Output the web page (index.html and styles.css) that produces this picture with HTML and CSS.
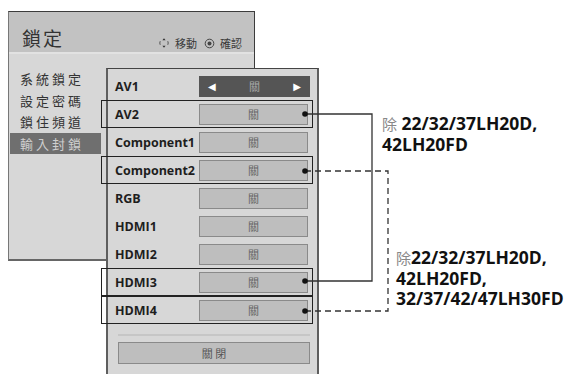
FILE: index.html
```html
<!DOCTYPE html>
<html lang="zh-Hant">

<head>
    <meta charset="utf-8">
    <title>鎖定</title>
    <link rel="stylesheet" href="styles.css">
</head>

<body>
    <div class="stage">
        <!-- main lock menu -->
        <section class="lock-menu">
            <header class="lock-head">
                <h1>鎖定</h1>
                <div class="hints">
                    <span class="hint">
                        <svg width="12" height="12" viewBox="0 0 12 12">
                            <path d="M6 1.2 L7.6 3.2 H4.4 Z M6 10.8 L7.6 8.8 H4.4 Z" fill="#333"/>
                            <path d="M2.2 4.2 A4.3 4.3 0 0 0 2.2 7.8 M9.8 4.2 A4.3 4.3 0 0 1 9.8 7.8" fill="none" stroke="#555" stroke-width="1"/>
                        </svg>
                        移動
                    </span>
                    <span class="hint">
                        <svg width="11" height="11" viewBox="0 0 11 11">
                            <circle cx="5.5" cy="5.5" r="4.3" fill="none" stroke="#444" stroke-width="1"/>
                            <circle cx="5.5" cy="5.5" r="2" fill="#444"/>
                        </svg>
                        確認
                    </span>
                </div>
            </header>
            <ul class="lock-list">
                <li>系統鎖定</li>
                <li>設定密碼</li>
                <li>鎖住頻道</li>
                <li class="active">輸入封鎖</li>
            </ul>
        </section>

        <!-- input block sub menu -->
        <section class="input-panel">
            <div class="row">
                <span class="label">AV1</span>
                <span class="value select"><span class="arr">&#9664;</span>關<span class="arr">&#9654;</span></span>
            </div>
            <div class="row marked">
                <span class="label">AV2</span>
                <span class="value">關</span>
            </div>
            <div class="row">
                <span class="label">Component1</span>
                <span class="value">關</span>
            </div>
            <div class="row marked">
                <span class="label">Component2</span>
                <span class="value">關</span>
            </div>
            <div class="row">
                <span class="label">RGB</span>
                <span class="value">關</span>
            </div>
            <div class="row">
                <span class="label">HDMI1</span>
                <span class="value">關</span>
            </div>
            <div class="row">
                <span class="label">HDMI2</span>
                <span class="value">關</span>
            </div>
            <div class="row marked">
                <span class="label">HDMI3</span>
                <span class="value">關</span>
            </div>
            <div class="row marked">
                <span class="label">HDMI4</span>
                <span class="value">關</span>
            </div>
            <div class="sep"></div>
            <div class="close-btn">關 閉</div>
        </section>

        <!-- leader lines to the notes -->
        <svg class="leaders" width="576" height="374" viewBox="0 0 576 374">
            <path d="M305 114 H372 V281 H305" fill="none" stroke="#333" stroke-width="1.3"/>
            <path d="M305 171 H388 V311 H305" fill="none" stroke="#333" stroke-width="1.3" stroke-dasharray="6 4"/>
            <circle cx="305" cy="114" r="2.8" fill="#111"/>
            <circle cx="305" cy="171" r="2.8" fill="#111"/>
            <circle cx="305" cy="281" r="2.8" fill="#111"/>
            <circle cx="305" cy="311" r="2.8" fill="#111"/>
        </svg>

        <p class="note note-a"><span class="cjk">除</span> 22/32/37LH20D,<br>42LH20FD</p>
        <p class="note note-b"><span class="cjk">除</span>22/32/37LH20D,<br>42LH20FD,<br>32/37/42/47LH30FD</p>
    </div>
</body>

</html>
```

FILE: styles.css
```css
body {
    margin: 0;
    background-color: #ffffff;
    font-family: "Open Sans", "Noto Sans CJK TC", sans-serif;
}

.stage {
    position: relative;
    width: 576px;
    height: 374px;
    overflow: hidden;
}

/* main menu */

.lock-menu {
    position: absolute;
    left: 8px;
    top: 11px;
    width: 245px;
    height: 247px;
    background-color: #d7d7d7;
    border-top: 1px solid #3c3c3c;
    border-right: 1px solid #3c3c3c;
    border-left: 1px solid #777777;
    border-bottom: 2px solid #666666;
}

.lock-head {
    height: 40px;
    background-color: #c2c2c2;
    border-bottom: 2px solid #e2e2e2;
    display: flex;
    align-items: flex-end;
    justify-content: space-between;
    padding: 0 12px 0 13px;
}

.lock-head h1 {
    margin: 0 0 2px 0;
    font-family: "Noto Sans CJK TC", sans-serif;
    font-weight: normal;
    font-size: 19px;
    line-height: 24px;
    letter-spacing: 2px;
    color: #333333;
}

.hints {
    display: flex;
    gap: 7px;
    margin-bottom: 1px;
    font-family: "Noto Sans CJK TC", sans-serif;
    font-size: 11px;
    line-height: 16px;
    color: #3a3a3a;
}

.hint {
    display: flex;
    align-items: center;
    gap: 5px;
}

.lock-list {
    list-style: none;
    margin: 0;
    padding: 14px 0 0 1px;
}

.lock-list li {
    width: 81px;
    height: 21.5px;
    line-height: 21.5px;
    padding-left: 10px;
    font-family: "Noto Sans CJK TC", sans-serif;
    font-size: 13px;
    letter-spacing: 3px;
    color: #333333;
}

.lock-list li.active {
    background-color: #6f6f6f;
    color: #cfcfcf;
}

/* input sub menu */

.input-panel {
    position: absolute;
    left: 106px;
    top: 68px;
    width: 209px;
    height: 320px;
    padding-top: 3px;
    background-color: #d7d7d7;
    border-top: 1px solid #444444;
    border-left: 2px solid #5e5e5e;
    border-right: 2px solid #5e5e5e;
}

.row {
    position: relative;
    height: 28px;
    display: flex;
    align-items: center;
}

.row.marked::before {
    content: "";
    position: absolute;
    left: -7px;
    top: 0;
    width: 210px;
    height: 26px;
    border: 1px solid #222222;
}

.label {
    width: 84px;
    padding-left: 7px;
    font-weight: bold;
    font-size: 12.5px;
    color: #1e1e1e;
}

.value {
    width: 107px;
    height: 19px;
    display: flex;
    align-items: center;
    justify-content: center;
    background-color: #bebebe;
    border: 1px solid #8a8a8a;
    font-family: "Noto Sans CJK TC", sans-serif;
    font-size: 11px;
    color: #666666;
}

.value.select {
    justify-content: space-between;
    padding: 0 8px;
    width: 93px;
    background-color: #555555;
    border-color: #555555;
    color: #a8a8a8;
}

.value .arr {
    font-family: "DejaVu Sans", sans-serif;
    font-size: 10px;
    color: #ffffff;
}

.sep {
    height: 2px;
    margin: 10px 7px 0 10px;
    background-color: #c6c6c6;
}

.close-btn {
    height: 20px;
    margin: 6px 7px 0 10px;
    background-color: #bebebe;
    border: 1px solid #8a8a8a;
    text-align: center;
    font-family: "Noto Sans CJK TC", sans-serif;
    font-size: 11px;
    line-height: 20px;
    color: #555555;
}

/* notes */

.leaders {
    position: absolute;
    left: 0;
    top: 0;
    pointer-events: none;
}

.note {
    position: absolute;
    margin: 0;
    font-weight: bold;
    font-size: 17.5px;
    line-height: 20px;
    color: #111111;
}

.note .cjk {
    font-family: "Noto Sans CJK TC", sans-serif;
    font-weight: normal;
    font-size: 15px;
    color: #888888;
}

.note-a {
    left: 382px;
    top: 113px;
}

.note-b {
    left: 396px;
    top: 247px;
}
```
